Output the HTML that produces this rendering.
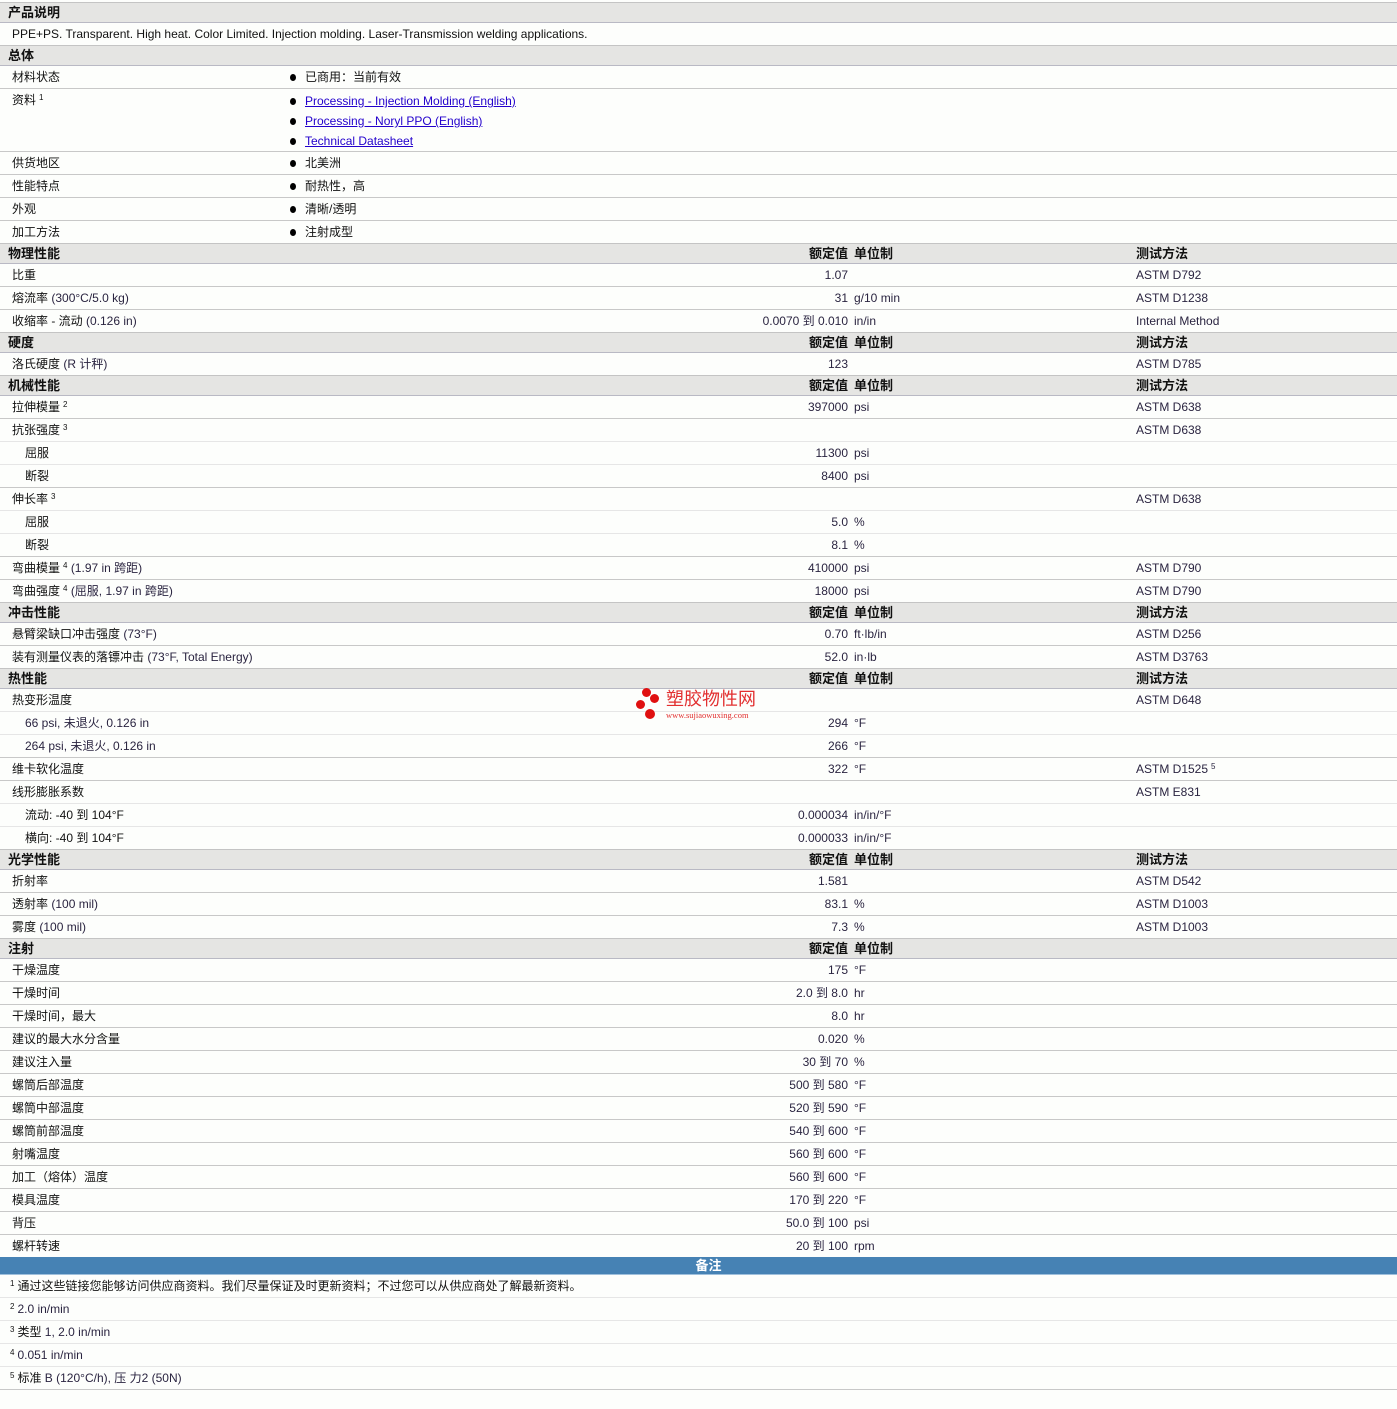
<!DOCTYPE html>
<html><head><meta charset="utf-8"><style>
*{margin:0;padding:0;box-sizing:border-box}
body{width:1397px;height:1409px;background:#fdfefc;font-family:"Liberation Sans","Noto Sans CJK SC",sans-serif;font-size:12px;color:#111;padding-top:2px;overflow:hidden}
.h{height:21px;background:#e5e5e3;border-top:1px solid #c4c4c4;border-bottom:1px solid #b9b9c4;position:relative;font-weight:bold;line-height:19px;font-size:13px}
.r{height:23px;border-bottom:1px solid #c8c8c8;position:relative;line-height:22px}
.r.s{border-bottom-color:#e6e6e6}
.r.n{height:22px;border-bottom:none}
span{position:absolute;white-space:nowrap}
.h .l{left:8px}
.l{left:12px}.l2{left:25px}
.v{right:549px}.u{left:854px}.t{left:1136px}
.b2{left:305px}
.g{color:#2a2440}
sup{font-size:8px;line-height:0;position:relative;top:-4px;vertical-align:baseline;margin-left:3px}
a{color:#2200cc;text-decoration:underline}
.dot{display:inline-block;width:6px;height:7px;border-radius:50%;background:#000;position:absolute;left:290px}
</style></head><body>
<div class="h"><span class="l">产品说明</span></div>
<div class="r n"><span class="l">PPE+PS. Transparent. High heat. Color Limited. Injection molding. Laser-Transmission welding applications.</span></div>
<div class="h"><span class="l">总体</span></div>
<div class="r"><span class="l">材料状态</span><i class="dot" style="top:8px"></i><span class="b2">已商用：当前有效</span></div>
<div class="r" style="height:63px"><span class="l" style="top:0">资料<sup>1</sup></span>
<i class="dot" style="top:9px"></i><span class="b2" style="top:1px"><a>Processing - Injection Molding (English)</a></span>
<i class="dot" style="top:29px"></i><span class="b2" style="top:21px"><a>Processing - Noryl PPO (English)</a></span>
<i class="dot" style="top:49px"></i><span class="b2" style="top:41px"><a>Technical Datasheet</a></span></div>
<div class="r"><span class="l">供货地区</span><i class="dot" style="top:8px"></i><span class="b2">北美洲</span></div>
<div class="r"><span class="l">性能特点</span><i class="dot" style="top:8px"></i><span class="b2">耐热性，高</span></div>
<div class="r"><span class="l">外观</span><i class="dot" style="top:8px"></i><span class="b2">清晰/透明</span></div>
<div class="r n"><span class="l">加工方法</span><i class="dot" style="top:8px"></i><span class="b2">注射成型</span></div>
<div class="h"><span class="l">物理性能</span><span class="v">额定值</span><span class="u">单位制</span><span class="t">测试方法</span></div>
<div class="r"><span class="l">比重</span><span class="v g">1.07</span><span class="t g">ASTM D792</span></div>
<div class="r"><span class="l">熔流率 <span class="g" style="position:static">(300°C/5.0 kg)</span></span><span class="v g">31</span><span class="u g">g/10 min</span><span class="t g">ASTM D1238</span></div>
<div class="r n"><span class="l">收缩率 - 流动 <span class="g" style="position:static">(0.126 in)</span></span><span class="v g">0.0070 到 0.010</span><span class="u g">in/in</span><span class="t g">Internal Method</span></div>
<div class="h"><span class="l">硬度</span><span class="v">额定值</span><span class="u">单位制</span><span class="t">测试方法</span></div>
<div class="r n"><span class="l">洛氏硬度 <span class="g" style="position:static">(R 计秤)</span></span><span class="v g">123</span><span class="t g">ASTM D785</span></div>
<div class="h"><span class="l">机械性能</span><span class="v">额定值</span><span class="u">单位制</span><span class="t">测试方法</span></div>
<div class="r"><span class="l">拉伸模量<sup>2</sup></span><span class="v g">397000</span><span class="u g">psi</span><span class="t g">ASTM D638</span></div>
<div class="r s"><span class="l">抗张强度<sup>3</sup></span><span class="t g">ASTM D638</span></div>
<div class="r s"><span class="l2">屈服</span><span class="v g">11300</span><span class="u g">psi</span></div>
<div class="r"><span class="l2">断裂</span><span class="v g">8400</span><span class="u g">psi</span></div>
<div class="r s"><span class="l">伸长率<sup>3</sup></span><span class="t g">ASTM D638</span></div>
<div class="r s"><span class="l2">屈服</span><span class="v g">5.0</span><span class="u g">%</span></div>
<div class="r"><span class="l2">断裂</span><span class="v g">8.1</span><span class="u g">%</span></div>
<div class="r"><span class="l">弯曲模量<sup>4</sup> <span class="g" style="position:static">(1.97 in 跨距)</span></span><span class="v g">410000</span><span class="u g">psi</span><span class="t g">ASTM D790</span></div>
<div class="r n"><span class="l">弯曲强度<sup>4</sup> <span class="g" style="position:static">(屈服, 1.97 in 跨距)</span></span><span class="v g">18000</span><span class="u g">psi</span><span class="t g">ASTM D790</span></div>
<div class="h"><span class="l">冲击性能</span><span class="v">额定值</span><span class="u">单位制</span><span class="t">测试方法</span></div>
<div class="r"><span class="l">悬臂梁缺口冲击强度 <span class="g" style="position:static">(73°F)</span></span><span class="v g">0.70</span><span class="u g">ft·lb/in</span><span class="t g">ASTM D256</span></div>
<div class="r n"><span class="l">装有测量仪表的落镖冲击 <span class="g" style="position:static">(73°F, Total Energy)</span></span><span class="v g">52.0</span><span class="u g">in·lb</span><span class="t g">ASTM D3763</span></div>
<div class="h"><span class="l">热性能</span><span class="v">额定值</span><span class="u">单位制</span><span class="t">测试方法</span></div>
<div class="r s"><span class="l">热变形温度</span><span class="t g">ASTM D648</span></div>
<div class="r s"><span class="l2 g">66 psi, 未退火, 0.126 in</span><span class="v g">294</span><span class="u g">°F</span></div>
<div class="r"><span class="l2 g">264 psi, 未退火, 0.126 in</span><span class="v g">266</span><span class="u g">°F</span></div>
<div class="r"><span class="l">维卡软化温度</span><span class="v g">322</span><span class="u g">°F</span><span class="t g">ASTM D1525<sup>5</sup></span></div>
<div class="r s"><span class="l">线形膨胀系数</span><span class="t g">ASTM E831</span></div>
<div class="r s"><span class="l2">流动: -40 到 104°F</span><span class="v g">0.000034</span><span class="u g">in/in/°F</span></div>
<div class="r n"><span class="l2">横向: -40 到 104°F</span><span class="v g">0.000033</span><span class="u g">in/in/°F</span></div>
<div class="h"><span class="l">光学性能</span><span class="v">额定值</span><span class="u">单位制</span><span class="t">测试方法</span></div>
<div class="r"><span class="l">折射率</span><span class="v g">1.581</span><span class="t g">ASTM D542</span></div>
<div class="r"><span class="l">透射率 <span class="g" style="position:static">(100 mil)</span></span><span class="v g">83.1</span><span class="u g">%</span><span class="t g">ASTM D1003</span></div>
<div class="r n"><span class="l">雾度 <span class="g" style="position:static">(100 mil)</span></span><span class="v g">7.3</span><span class="u g">%</span><span class="t g">ASTM D1003</span></div>
<div class="h"><span class="l">注射</span><span class="v">额定值</span><span class="u">单位制</span></div>
<div class="r"><span class="l">干燥温度</span><span class="v g">175</span><span class="u g">°F</span></div>
<div class="r"><span class="l">干燥时间</span><span class="v g">2.0 到 8.0</span><span class="u g">hr</span></div>
<div class="r"><span class="l">干燥时间，最大</span><span class="v g">8.0</span><span class="u g">hr</span></div>
<div class="r"><span class="l">建议的最大水分含量</span><span class="v g">0.020</span><span class="u g">%</span></div>
<div class="r"><span class="l">建议注入量</span><span class="v g">30 到 70</span><span class="u g">%</span></div>
<div class="r"><span class="l">螺筒后部温度</span><span class="v g">500 到 580</span><span class="u g">°F</span></div>
<div class="r"><span class="l">螺筒中部温度</span><span class="v g">520 到 590</span><span class="u g">°F</span></div>
<div class="r"><span class="l">螺筒前部温度</span><span class="v g">540 到 600</span><span class="u g">°F</span></div>
<div class="r"><span class="l">射嘴温度</span><span class="v g">560 到 600</span><span class="u g">°F</span></div>
<div class="r"><span class="l">加工（熔体）温度</span><span class="v g">560 到 600</span><span class="u g">°F</span></div>
<div class="r"><span class="l">模具温度</span><span class="v g">170 到 220</span><span class="u g">°F</span></div>
<div class="r"><span class="l">背压</span><span class="v g">50.0 到 100</span><span class="u g">psi</span></div>
<div class="r n"><span class="l">螺杆转速</span><span class="v g">20 到 100</span><span class="u g">rpm</span></div>
<div style="height:18px;background:#4682b4;color:#fff;font-weight:bold;text-align:center;line-height:17px;font-size:13px;border-bottom:1px solid #9fc0dc;padding-left:20px">备注</div>
<div class="r s"><span class="l" style="left:10px"><sup style="margin:0 3px 0 0">1</sup>通过这些链接您能够访问供应商资料。我们尽量保证及时更新资料；不过您可以从供应商处了解最新资料。</span></div>
<div class="r s"><span class="l" style="left:10px"><sup style="margin:0 3px 0 0">2</sup><span class="g" style="position:static">2.0 in/min</span></span></div>
<div class="r s"><span class="l" style="left:10px"><sup style="margin:0 3px 0 0">3</sup>类型 <span class="g" style="position:static">1, 2.0 in/min</span></span></div>
<div class="r s"><span class="l" style="left:10px"><sup style="margin:0 3px 0 0">4</sup><span class="g" style="position:static">0.051 in/min</span></span></div>
<div class="r"><span class="l" style="left:10px"><sup style="margin:0 3px 0 0">5</sup>标准 <span class="g" style="position:static">B (120°C/h), 压 力2 (50N)</span></span></div>
<div style="position:absolute;left:636px;top:688px;width:130px;height:34px">
<i style="position:absolute;left:6px;top:0;width:9px;height:9px;border-radius:50%;background:#e01010"></i>
<i style="position:absolute;left:14px;top:6px;width:9px;height:9px;border-radius:50%;background:#e01010"></i>
<i style="position:absolute;left:0;top:12px;width:9px;height:9px;border-radius:50%;background:#e01010"></i>
<i style="position:absolute;left:9px;top:21px;width:10px;height:10px;border-radius:50%;background:#e01010"></i>
<span style="left:30px;top:2px;color:#e23030;font-size:18px;line-height:19px">塑胶物性网</span>
<span style="left:30px;top:22px;color:#e23030;font-size:8.5px;font-family:'Liberation Serif',serif">www.sujiaowuxing.com</span>
</div>
</body></html>
